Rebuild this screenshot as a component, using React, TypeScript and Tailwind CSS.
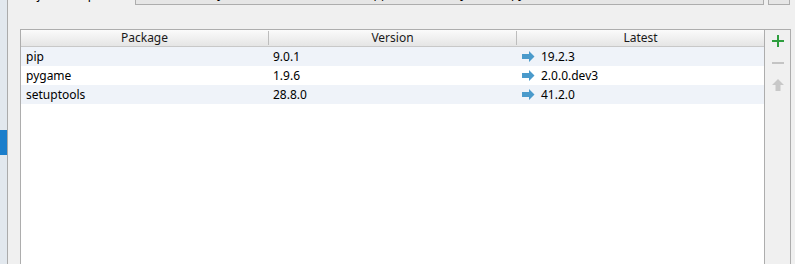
import React from "react";

const rows = [
  { name: "pip", version: "9.0.1", latest: "19.2.3", alt: true },
  { name: "pygame", version: "1.9.6", latest: "2.0.0.dev3", alt: false },
  { name: "setuptools", version: "28.8.0", latest: "41.2.0", alt: true },
];

function Arrow() {
  return (
    <svg width="13" height="11" viewBox="0 0 13 11" className="shrink-0">
      <polygon points="0,3 7,3 7,0 12.5,5.5 7,11 7,8 0,8" fill="#4a9acb" />
    </svg>
  );
}

export default function App() {
  return (
    <div
      className="w-[795px] h-[264px] bg-[#f0f0f0] flex overflow-hidden text-[12px] text-black"
      style={{ fontFamily: '"Noto Sans", "Open Sans", sans-serif' }}
    >
      {/* left strip */}
      <div className="w-[7px] h-full bg-[#e2e8ee] flex flex-col">
        <div className="h-[130px]" />
        <div className="h-[25px] bg-[#1b7ecb]" />
      </div>
      <div className="w-px h-full bg-[#ababab]" />

      {/* main */}
      <div className="flex-1 flex flex-col">
        {/* top row (cut off) */}
        <div className="h-[5px] flex shrink-0">
          <div className="w-[127px] h-[5px] overflow-hidden pl-[10px]">
            <div className="mt-[-12px] leading-[14px] whitespace-nowrap">Project Interpreter:</div>
          </div>
          <div className="w-[629px] h-[5px] bg-[#e6e6e6] border-x border-b border-[#adadad] overflow-hidden pl-[74px]">
            <div className="mt-[-13px] leading-[14px] whitespace-nowrap">
              Python 3.7 C:\Users\Admin\AppData\Local\Python37\python.exe
            </div>
          </div>
          <div className="w-[4px]" />
          <div className="w-[22px] h-[5px] bg-[#e6e6e6] border-x border-b border-[#adadad]" />
        </div>

        <div className="h-[24px] shrink-0" />

        {/* table + buttons */}
        <div className="ml-[12px] w-[771px] flex-1 flex border border-b-0 border-[#adadad]">
          <div className="w-[744px] h-full bg-white border-r border-[#adadad] flex flex-col">
            {/* header */}
            <div className="h-[17px] grid grid-cols-[248px_248px_1fr] bg-gradient-to-b from-[#fbfbfb] to-[#e5e5e5] border-b border-[#c8c8c8] text-[#1a1a1a]">
              <div className="flex">
                <div className="flex-1 text-center leading-[16px]">Package</div>
                <div className="w-px my-[1px] bg-[#bdbdbd]" />
              </div>
              <div className="flex">
                <div className="flex-1 text-center leading-[16px]">Version</div>
                <div className="w-px my-[1px] bg-[#bdbdbd]" />
              </div>
              <div className="text-center leading-[16px]">Latest</div>
            </div>
            {rows.map((r) => (
              <div
                key={r.name}
                className={
                  "h-[19px] grid grid-cols-[248px_248px_1fr] items-center " +
                  (r.alt ? "bg-[#eff3f9]" : "bg-white")
                }
              >
                <div className="pl-[5px] leading-[19px]">{r.name}</div>
                <div className="pl-[4px] leading-[19px]">{r.version}</div>
                <div className="pl-[5px] flex items-center gap-[6px] leading-[19px]">
                  <Arrow />
                  <span>{r.latest}</span>
                </div>
              </div>
            ))}
          </div>

          {/* side buttons */}
          <div className="flex-1 flex flex-col items-center">
            <div className="h-[22px] flex items-center justify-center">
              <svg width="12" height="12" viewBox="0 0 12 12">
                <rect x="5" y="0" width="2" height="12" fill="#2e9e3e" />
                <rect x="0" y="5" width="12" height="2" fill="#2e9e3e" />
              </svg>
            </div>
            <div className="h-[22px] flex items-center justify-center">
              <svg width="12" height="12" viewBox="0 0 12 12">
                <rect x="0" y="5" width="12" height="2" fill="#c4c4c4" />
              </svg>
            </div>
            <div className="h-[22px] flex items-center justify-center">
              <svg width="12" height="12" viewBox="0 0 12 12">
                <polygon points="6,0 12,6 8.5,6 8.5,12 3.5,12 3.5,6 0,6" fill="#c8c8c8" />
              </svg>
            </div>
          </div>
        </div>
      </div>
    </div>
  );
}
